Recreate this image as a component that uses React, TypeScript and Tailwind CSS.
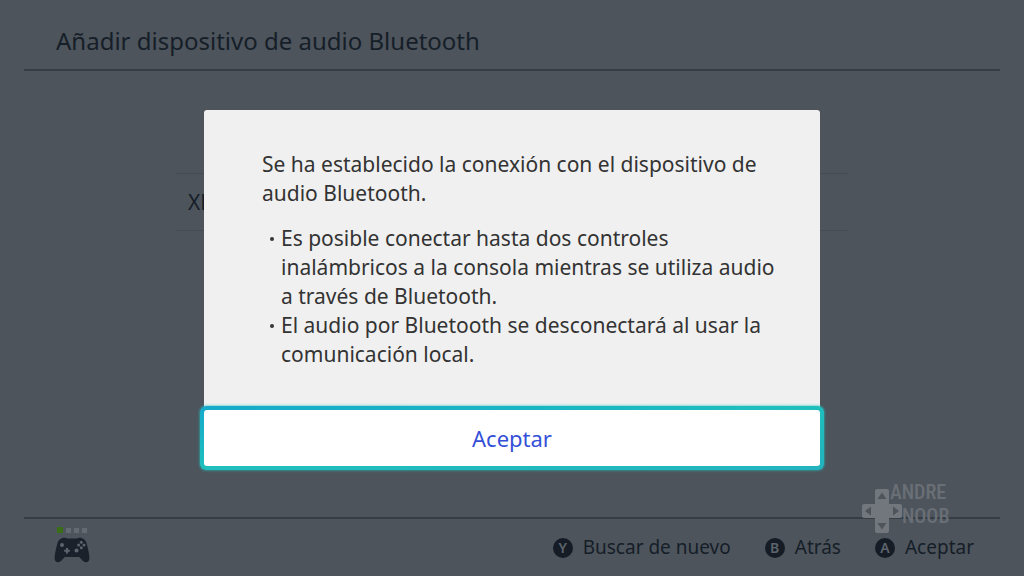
type ButtonHintProps = {
  button: string;
  label: string;
};

const players = [1, 2, 3, 4];

const notes = [
  'Es posible conectar hasta dos controles inalámbricos a la consola mientras se utiliza audio a través de Bluetooth.',
  'El audio por Bluetooth se desconectará al usar la comunicación local.',
];

function ButtonHint({ button, label }: ButtonHintProps) {
  return (
    <button type="button" className="flex items-center gap-2.5 text-[19px]">
      <span className="flex size-5 items-center justify-center rounded-full bg-[#151c25] text-sm font-semibold text-[#5d646c]">
        {button}
      </span>
      <span>{label}</span>
    </button>
  );
}

function ControllerIcon() {
  return (
    <svg className="h-[26px] w-9" viewBox="0 0 36 26" aria-hidden="true">
      <path
        d="M8 1.2C9.500.4 12 .6 13 1.500H23C24 .6 26.500.4 28 1.200C30.500 2.200 31.800 3.500 32.500 6C33.800 10.500 35.300 17 35.400 21C35.400 24 33.800 25.300 31.800 25.200C29.500 25 27.500 22.500 25.300 20H10.700C8.500 22.500 6.500 25 4.200 25.200C2.200 25.300.6 24 .6 21C.7 17 2.200 10.500 3.500 6C4.200 3.500 5.500 2.200 8 1.200Z"
        fill="#1a212b"
      />
      <g fill="#5d646c">
        <circle cx="8" cy="8" r="2" />
        <circle cx="22.500" cy="13.600" r="2" />
        <path d="M12 11h2v1.800h1.800v2H14v1.800h-2v-1.800h-1.800v-2H12z" />
        <circle cx="27.300" cy="5.300" r="1.500" />
        <circle cx="27.300" cy="10.700" r="1.500" />
        <circle cx="24.600" cy="8" r="1.500" />
        <circle cx="30" cy="8" r="1.500" />
      </g>
    </svg>
  );
}

function Watermark() {
  return (
    <div className="absolute right-[72px] bottom-[42px] flex w-[92px] text-[#6a6f76]">
      <svg
        className="h-[54px] w-[42px] shrink-0"
        viewBox="0 0 42 54"
        aria-hidden="true"
      >
        <path
          d="M17 9h10a2 2 0 0 1 2 2v13h11a2 2 0 0 1 2 2v10a2 2 0 0 1-2 2H29v13a2 2 0 0 1-2 2H17a2 2 0 0 1-2-2V38H4a2 2 0 0 1-2-2V26a2 2 0 0 1 2-2h11V11a2 2 0 0 1 2-2z"
          fill="#72777e"
        />
        <path
          d="M22 12.500l4.500 6.500h-9zM22 49.500l4.500-6.500h-9zM5 31l6-4.500v9zM39 31l-6-4.500v9z"
          fill="#4d545c"
        />
      </svg>
      <div className="-ml-3 font-['Roboto_Condensed','Liberation_Sans_Narrow','Liberation_Sans',sans-serif] text-xl leading-6 font-medium">
        <p>ANDRE</p>
        <p className="pl-3">NOOB</p>
      </div>
    </div>
  );
}

// Dialog with a single highlighted action
function ConnectedDialog() {
  return (
    <div className="absolute inset-0 flex items-center justify-center px-6">
      <div
        role="dialog"
        aria-modal="true"
        aria-describedby="dialog-text"
        className="w-full max-w-[616px] rounded-t-[3px] bg-[#f0f0f0] text-[#333333]"
      >
        <div
          id="dialog-text"
          className="flex flex-col gap-4 px-[58px] pt-10 pr-11 pb-[41px] text-[21px] leading-[29px]"
        >
          <p>
            Se ha establecido la conexión con el dispositivo de audio Bluetooth.
          </p>
          <ul className="pl-2">
            {notes.map((note) => (
              <li key={note} className="flex">
                <span className="flex w-[11px] shrink-0 pt-[13px]">
                  <span className="size-1 rounded-full bg-[#333333]" />
                </span>
                <span>{note}</span>
              </li>
            ))}
          </ul>
        </div>
        <div className="-mx-1 -my-1 rounded-md bg-linear-to-br from-[#17a9cb] via-[#1fbfbd] to-[#22b3bf] p-1 shadow-[0_0_3px_#1fc4bd]">
          <button
            type="button"
            className="h-14 w-full rounded-[3px] bg-white text-[22px] text-[#3550d8]"
          >
            Aceptar
          </button>
        </div>
      </div>
    </div>
  );
}

export default function App() {
  return (
    <div className="relative flex min-h-screen flex-col bg-[#4d545c] px-6 font-['Noto_Sans',sans-serif] text-[#161e28]">
      <header className="border-b-2 border-[#363d46] px-8 pt-[25px] pb-3">
        <h1 className="text-2xl leading-8">
          Añadir dispositivo de audio Bluetooth
        </h1>
      </header>

      <main className="flex-1 pt-[102px]">
        <div className="mx-auto max-w-[672px] border-y border-[#464c55] px-3 py-3 text-[21px] leading-8">
          XL
        </div>
      </main>

      <footer className="flex h-[59px] justify-between border-t-2 border-[#363d46] px-[30px] pr-[26px]">
        <div className="flex flex-col items-start gap-1 pt-2">
          <div className="flex items-center gap-[3px] pl-[3px]">
            {players.map((player) => (
              <span
                key={player}
                className={
                  player === 1
                    ? 'size-1.5 bg-[#3a6f17]'
                    : 'size-[5px] bg-[#646a71]'
                }
              />
            ))}
          </div>
          <ControllerIcon />
        </div>
        <div className="flex items-center gap-[34px]">
          <ButtonHint button="Y" label="Buscar de nuevo" />
          <ButtonHint button="B" label="Atrás" />
          <ButtonHint button="A" label="Aceptar" />
        </div>
      </footer>

      <Watermark />
      <ConnectedDialog />
    </div>
  );
}
